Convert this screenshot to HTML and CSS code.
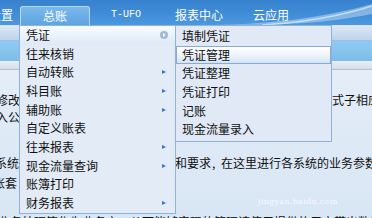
FILE: index.html
```html
<!DOCTYPE html>
<html lang="zh">
<head>
<meta charset="utf-8">
<title>总账菜单</title>
<link rel="stylesheet" href="styles.css">
</head>
<body>
<div class="page">
  <header class="topbar">
    <svg class="swoosh" width="200" height="25" viewBox="0 0 200 25">
      <path d="M40 25 C100 24 150 18 200 4 L200 14 C150 24 110 25 40 25 Z" fill="#ffffff" fill-opacity="0.35"/>
      <path d="M90 25 C140 22 175 14 200 6" stroke="#ffffff" stroke-opacity="0.55" stroke-width="1.5" fill="none"/>
    </svg>
    <nav class="nav">
      <span class="tab tab-first">设置</span>
      <span class="tab tab-active">总账</span>
      <span class="tab tab-ufo">T-UFO</span>
      <span class="tab tab-report">报表中心</span>
      <span class="tab tab-cloud">云应用</span>
    </nav>
  </header>
  <div class="subbar">
    <div class="band band-light"></div>
    <div class="band band-blue"></div>
    <div class="band band-grey"></div>
  </div>
  <main class="content">
    <div class="line l1">修改系统中的各项参数设置并使其能够适应用户的实际业务需求式子相应</div>
    <div class="line l2">入公司的基本信息与核算要求</div>
    <div class="line l3">系统根据企业单位的实际核算内容和要求<span class="punct">,</span>在这里进行各系统的业务参数设置</div>
    <div class="line l4">账套：</div>
    <div class="line l5">业务处理等作为业务之一从而能够实现的管理请使用提供的用户带出数据根据</div>
  </main>
  <div class="watermark">jingyan.baidu.com</div>

  <ul class="menu">
    <li class="item item-hover">凭证<span class="circ"><svg width="8" height="8" viewBox="0 0 8 8"><circle cx="4" cy="4" r="4" fill="#a4b9cf"/><path d="M3 2 L5.6 4 L3 6 Z" fill="#ffffff"/></svg></span></li>
    <li class="item">往来核销</li>
    <li class="item sub">自动转账</li>
    <li class="item sub">科目账</li>
    <li class="item sub">辅助账</li>
    <li class="item">自定义账表</li>
    <li class="item sub">往来报表</li>
    <li class="item sub">现金流量查询</li>
    <li class="item">账簿打印</li>
    <li class="item sub">财务报表</li>
  </ul>

  <ul class="menu submenu">
    <li class="item">填制凭证</li>
    <li class="item item-sel">凭证管理</li>
    <li class="item">凭证整理</li>
    <li class="item">凭证打印</li>
    <li class="item">记账</li>
    <li class="item">现金流量录入</li>
  </ul>
</div>
</body>
</html>
```

FILE: styles.css
```css
* { box-sizing: border-box; }
html, body { margin: 0; padding: 0; }
body {
  width: 372px;
  height: 218px;
  overflow: hidden;
  font-family: "Noto Sans CJK SC", "Noto Sans", sans-serif;
  background: #dde8f5;
}
.page {
  position: relative;
  width: 372px;
  height: 218px;
  overflow: hidden;
  display: flex;
  flex-direction: column;
}
.topbar {
  position: relative;
  height: 25px;
  flex: none;
  background: linear-gradient(#3782ce, #418dd8 60%, #4c99e0);
  overflow: hidden;
}
.swoosh { position: absolute; right: 0; top: 0; }
.nav {
  position: relative;
  display: flex;
  align-items: flex-end;
  height: 25px;
  margin-left: -18px;
}
.tab {
  height: 19px;
  display: flex;
  align-items: center;
  justify-content: center;
  color: #ffffff;
  font-size: 12px;
  line-height: 1;
  padding-bottom: 1px;
}
.tab-first { width: 38px; }
.tab-active {
  width: 70px;
  border: 1px solid rgba(255, 255, 255, 0.55);
  border-bottom: none;
  border-radius: 3px 3px 0 0;
  background: linear-gradient(#7ab8ec, #5ea5e3);
}
.tab-ufo { width: 72px; font-family: "Liberation Mono", monospace; font-size: 10px; }
.tab-report { width: 74px; }
.tab-cloud { width: 70px; }

.subbar { flex: none; display: flex; flex-direction: column; }
.band-light { height: 16px; background: linear-gradient(#dfe9f5, #bcd3eb); border-bottom: 1px solid #9fbedd; }
.band-blue { height: 20px; background: linear-gradient(#8fcaf1, #7dbdec); }
.band-grey { height: 9px; background: linear-gradient(#e8eef4, #d5dee8); border-bottom: 1px solid #b3c2d2; }

.content {
  flex: 1;
  background: linear-gradient(#e4edf8, #d7e5f4);
  font-size: 12px;
  color: #111;
  white-space: nowrap;
  padding-top: 21px;
}
.line { line-height: 17px; height: 17px; margin-left: -4px; }
.l3 { margin-top: 29px; margin-left: -5px; }
.l4 { margin-top: 3px; margin-left: -7px; }
.l5 { margin-top: 22px; margin-left: -2px; }
.punct { display: inline-block; width: 10px; padding-left: 1px; }

.watermark {
  position: absolute;
  left: 258px;
  top: 197px;
  font-family: "DejaVu Serif", serif;
  font-size: 8px;
  color: rgba(255, 255, 255, 0.8);
  letter-spacing: 0.3px;
}

.menu {
  position: absolute;
  left: 19px;
  top: 25px;
  width: 157px;
  height: 189px;
  margin: 0;
  padding: 0;
  list-style: none;
  background: #e2ebf6;
  border: 1px solid #8fb2d8;
}
.item {
  position: relative;
  height: 18.67px;
  line-height: 18.67px;
  padding-left: 6px;
  font-size: 12px;
  color: #111;
}
.item-hover {
  background: linear-gradient(#f7fbff, #dde9f6);
}
.circ { position: absolute; left: 140px; top: 5px; height: 8px; display: block; line-height: 0; }
.sub::after {
  content: "";
  position: absolute;
  left: 142px;
  top: 7px;
  border-left: 4px solid #3a78c6;
  border-top: 2.5px solid transparent;
  border-bottom: 2.5px solid transparent;
}
.submenu {
  left: 175px;
  width: 157px;
  height: 117px;
  padding-top: 1px;
  background: #e0e9f5;
}
.item-sel {
  background: linear-gradient(#ffffff, #f1f6fc 45%, #d3e3f4);
  border: 1px solid #86acd6;
  line-height: 16.67px;
  padding-left: 5px;
}
```
